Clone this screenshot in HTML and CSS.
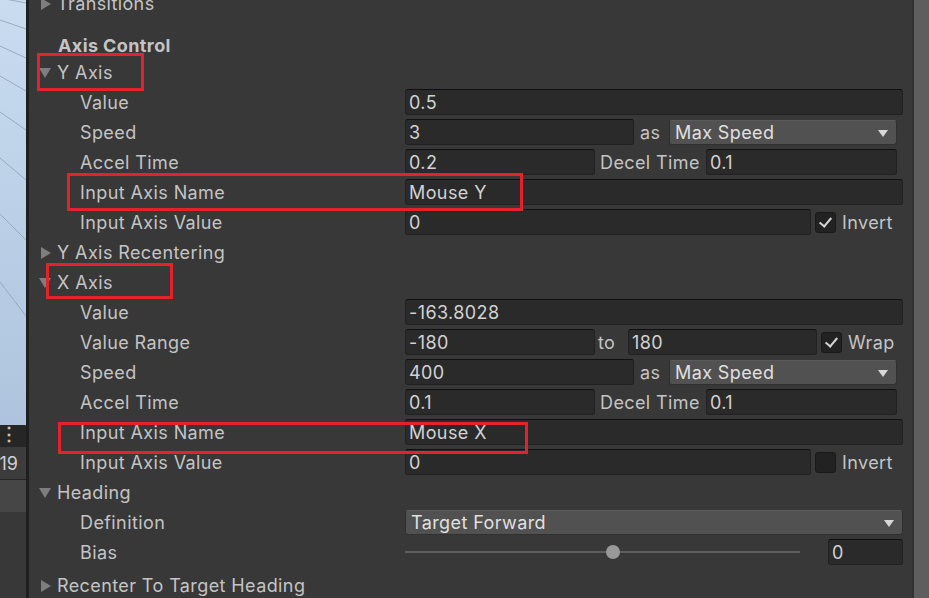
FILE: index.html
```html
<!DOCTYPE html>
<html lang="en">
<head>
    <meta charset="UTF-8">
    <title>Inspector - Axis Control</title>
    <link rel="stylesheet" href="styles.css">
</head>
<body>
    <div class="app">
        <div class="side">
            <div class="scene">
                <svg width="26" height="425" viewBox="0 0 26 425">
                    <g stroke="#8f9fb3" stroke-width="0.8" fill="none">
                        <line x1="0" y1="-2" x2="26" y2="3"/>
                        <line x1="0" y1="20" x2="26" y2="29"/>
                        <line x1="0" y1="46" x2="26" y2="58"/>
                        <line x1="0" y1="76" x2="26" y2="91"/>
                        <line x1="0" y1="112" x2="26" y2="130"/>
                        <line x1="0" y1="158" x2="26" y2="180"/>
                        <line x1="0" y1="214" x2="26" y2="240"/>
                        <line x1="0" y1="282" x2="26" y2="316"/>
                    </g>
                </svg>
            </div>
            <div class="side-toolbar"><span class="kebab">⋮</span></div>
            <div class="side-row">19</div>
            <div class="side-row side-row-alt"></div>
        </div>
        <div class="divider"></div>

        <div class="inspector">
            <div class="row foldout first">
                <span class="arrow closed"></span><span>Transitions</span>
            </div>
            <div class="row header">Axis Control</div>

            <!-- Y Axis -->
            <div class="row foldout">
                <span class="arrow open"></span><span>Y Axis</span>
            </div>
            <div class="row prop">
                <div class="label">Value</div>
                <div class="field grow">0.5</div>
            </div>
            <div class="row prop">
                <div class="label">Speed</div>
                <div class="field w-speed">3</div>
                <span class="mid-label as">as</span>
                <div class="dropdown grow short">Max Speed<span class="caret"></span></div>
            </div>
            <div class="row prop">
                <div class="label">Accel Time</div>
                <div class="field w-accel">0.2</div>
                <span class="mid-label decel">Decel Time</span>
                <div class="field grow short">0.1</div>
            </div>
            <div class="row prop">
                <div class="label">Input Axis Name</div>
                <div class="field grow">Mouse Y</div>
            </div>
            <div class="row prop">
                <div class="label">Input Axis Value</div>
                <div class="field w-axisval">0</div>
                <span class="check on"></span>
                <span class="check-label">Invert</span>
            </div>
            <div class="row foldout">
                <span class="arrow closed"></span><span>Y Axis Recentering</span>
            </div>

            <!-- X Axis -->
            <div class="row foldout">
                <span class="arrow open"></span><span>X Axis</span>
            </div>
            <div class="row prop">
                <div class="label">Value</div>
                <div class="field grow">-163.8028</div>
            </div>
            <div class="row prop">
                <div class="label">Value Range</div>
                <div class="field w-accel">-180</div>
                <span class="mid-label to">to</span>
                <div class="field w-range">180</div>
                <span class="check on"></span>
                <span class="check-label">Wrap</span>
            </div>
            <div class="row prop">
                <div class="label">Speed</div>
                <div class="field w-speed">400</div>
                <span class="mid-label as">as</span>
                <div class="dropdown grow short">Max Speed<span class="caret"></span></div>
            </div>
            <div class="row prop">
                <div class="label">Accel Time</div>
                <div class="field w-accel">0.1</div>
                <span class="mid-label decel">Decel Time</span>
                <div class="field grow short">0.1</div>
            </div>
            <div class="row prop">
                <div class="label">Input Axis Name</div>
                <div class="field grow">Mouse X</div>
            </div>
            <div class="row prop">
                <div class="label">Input Axis Value</div>
                <div class="field w-axisval">0</div>
                <span class="check"></span>
                <span class="check-label">Invert</span>
            </div>

            <!-- Heading -->
            <div class="row foldout">
                <span class="arrow open"></span><span>Heading</span>
            </div>
            <div class="row prop">
                <div class="label">Definition</div>
                <div class="dropdown grow">Target Forward<span class="caret"></span></div>
            </div>
            <div class="row prop">
                <div class="label">Bias</div>
                <div class="slider"><span class="knob"></span></div>
                <div class="field w-bias">0</div>
            </div>
            <div class="row foldout last">
                <span class="arrow closed"></span><span>Recenter To Target Heading</span>
            </div>
        </div>

        <div class="scroll-gap"></div>
        <div class="scrollbar"></div>

        <!-- red annotation boxes -->
        <div class="mark mark-y"></div>
        <div class="mark mark-yname"></div>
        <div class="mark mark-x"></div>
        <div class="mark mark-xname"></div>
    </div>
</body>
</html>
```

FILE: styles.css
```css
* {
    box-sizing: border-box;
    margin: 0;
    padding: 0;
}

html, body {
    width: 929px;
    height: 598px;
    overflow: hidden;
    background: #383838;
}

body {
    font-family: Inter, "Noto Sans", sans-serif;
    font-size: 18px;
    letter-spacing: 0.4px;
    color: #c4c4c4;
}

.app {
    position: relative;
    display: flex;
    width: 929px;
    height: 598px;
    overflow: hidden;
}

/* left strip: scene view + hierarchy remains */
.side {
    width: 26px;
    display: flex;
    flex-direction: column;
    background: #383838;
}

.scene {
    height: 425px;
    background: linear-gradient(#c9dcf0, #aec4de);
    overflow: hidden;
}

.scene svg {
    display: block;
}

.side-toolbar {
    height: 22px;
    background: #262626;
    border-top-right-radius: 4px;
    position: relative;
}

.kebab {
    position: absolute;
    left: 0;
    top: -2px;
    font-size: 18px;
    font-weight: bold;
    color: #c4c4c4;
}

.side-row {
    height: 33px;
    background: #3c3c3c;
    border-bottom: 1px solid #262626;
    display: flex;
    align-items: center;
    justify-content: flex-end;
    padding-right: 8px;
    font-size: 18px;
    letter-spacing: 0;
    color: #cfcfcf;
}

.side-row-alt {
    height: 32px;
    background: #464646;
    border-bottom: none;
}

.divider {
    width: 3px;
    background: #1f1f1f;
}

/* inspector */
.inspector {
    flex: 1;
    padding: 0 9px 0 11px;
}

.row {
    display: flex;
    align-items: center;
    height: 30px;
    padding-top: 1px;
    white-space: nowrap;
}

.first {
    margin-top: -12px;
}

.header {
    height: 24px;
    margin-top: 15px;
    padding-left: 18px;
    font-weight: bold;
}

.last {
    margin-top: 3px;
}

.arrow {
    width: 17px;
    height: 28px;
    position: relative;
}

.arrow.closed::before {
    content: "";
    position: absolute;
    left: 1px;
    top: 8px;
    border-left: 10px solid #7e7e7e;
    border-top: 6px solid transparent;
    border-bottom: 6px solid transparent;
}

.arrow.open::before {
    content: "";
    position: absolute;
    left: -1px;
    top: 9px;
    border-top: 10px solid #7e7e7e;
    border-left: 6px solid transparent;
    border-right: 6px solid transparent;
}

.prop .label {
    width: 365px;
    padding-left: 40px;
}

.field {
    height: 26px;
    margin-top: -1px;
    background: #2a2a2a;
    border: 1px solid #212121;
    border-top-color: #0f0f0f;
    border-radius: 3px;
    padding-left: 3px;
    padding-top: 1px;
    display: flex;
    align-items: center;
    color: #d2d2d2;
}

.grow {
    flex: 1;
}

.short {
    margin-right: 6px;
}

.w-speed { width: 229px; }
.w-accel { width: 190px; }
.w-range { width: 189px; }
.w-axisval { width: 406px; }
.w-bias { width: 75px; margin-left: auto; }

.mid-label {
    color: #c4c4c4;
}

.as { margin: 0 6px 0 6px; width: 23px; }
.decel { margin: 0 5px 0 5px; width: 101px; }
.to { margin: 0 13px 0 3px; width: 17px; }

.dropdown {
    height: 25px;
    margin-top: -1px;
    background: #515151;
    border: 1px solid #303030;
    border-top-color: #5a5a5a;
    border-radius: 3px;
    padding-left: 5px;
    padding-top: 1px;
    display: flex;
    align-items: center;
    color: #e0e0e0;
    position: relative;
}

.caret {
    position: absolute;
    right: 8px;
    top: 9px;
    border-top: 7px solid #d8d8d8;
    border-left: 5px solid transparent;
    border-right: 5px solid transparent;
}

.check {
    width: 21px;
    height: 21px;
    margin-left: 4px;
    margin-top: -1px;
    background: #222;
    border: 1px solid #191919;
    border-radius: 3px;
    position: relative;
}

.check.on::after {
    content: "";
    position: absolute;
    left: 6px;
    top: 2px;
    width: 5px;
    height: 10px;
    border: solid #d6d6d6;
    border-width: 0 2px 2px 0;
    transform: rotate(40deg);
}

.check-label {
    margin-left: 6px;
}

.slider {
    width: 395px;
    height: 30px;
    margin-top: -1px;
    position: relative;
}

.slider::before {
    content: "";
    position: absolute;
    left: 0;
    right: 0;
    top: 14px;
    height: 2px;
    background: #5e5e5e;
}

.knob {
    position: absolute;
    left: 201px;
    top: 8px;
    width: 14px;
    height: 14px;
    border-radius: 50%;
    background: #999;
}

.scroll-gap {
    width: 2px;
    background: #313131;
}

.scrollbar {
    width: 15px;
    background: #5e5e5e;
}

/* annotations */
.mark {
    position: absolute;
    border: 3px solid #e3232b;
}

.mark-y { left: 37px; top: 53px; width: 107px; height: 38px; }
.mark-yname { left: 67px; top: 173px; width: 456px; height: 38px; }
.mark-x { left: 46px; top: 263px; width: 127px; height: 36px; }
.mark-xname { left: 58px; top: 422px; width: 470px; height: 32px; }
```
